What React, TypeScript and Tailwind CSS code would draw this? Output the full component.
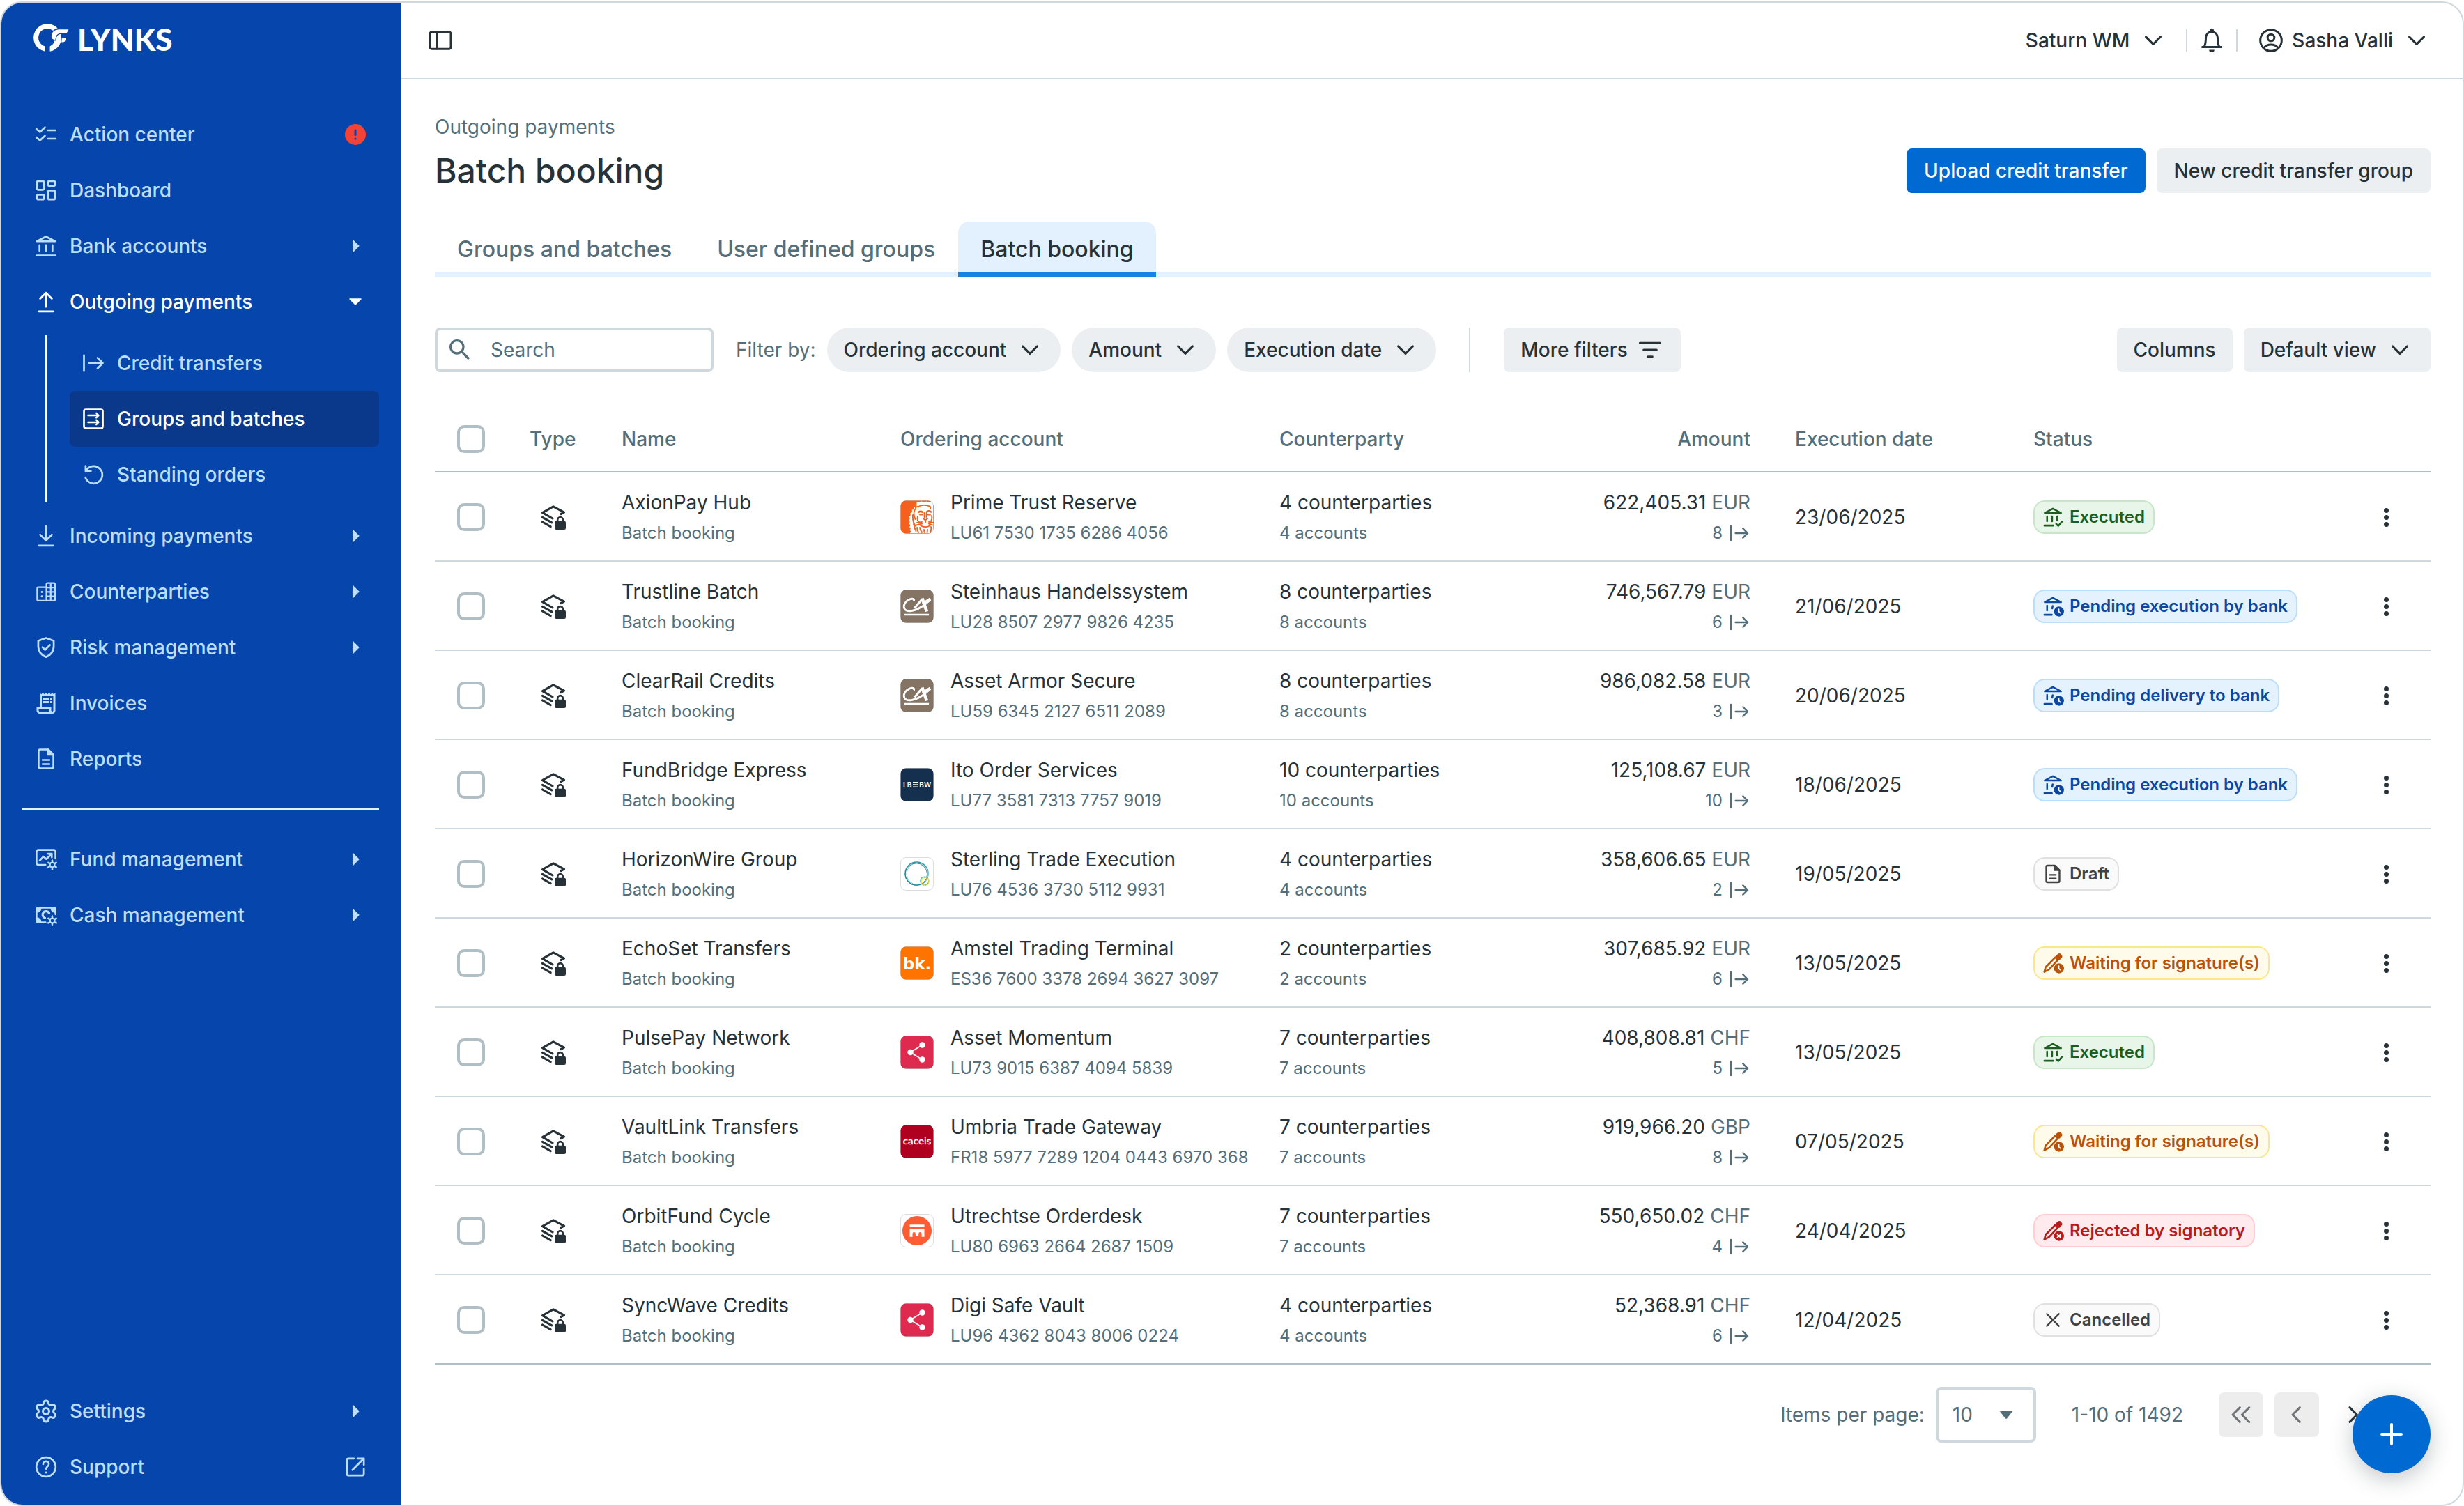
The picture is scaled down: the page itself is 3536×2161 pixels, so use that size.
import React from "react";
import type { ReactNode } from "react";
import { Settings } from "lucide-react";
import { MdOutlineReceiptLong, MdSearch } from "react-icons/md";

type IconProps = { className?: string; children: ReactNode; weight?: number };

function Glyph({ className = "size-9", children, weight = 1.8 }: IconProps) {
  return (
    <svg
      viewBox="0 0 24 24"
      aria-hidden="true"
      className={`shrink-0 ${className}`}
      fill="none"
      stroke="currentColor"
      strokeWidth={weight}
      strokeLinecap="round"
      strokeLinejoin="round"
    >
      {children}
    </svg>
  );
}

const SmallGear = () => (
  <>
    <circle cx="18" cy="17.4" r="2.3" strokeWidth="1.5" />
    <path
      strokeWidth="1.7"
      d="M18 14.2v-1.2M18 20.6v1.2M15.2 15.8l-1-.6M20.8 19l1 .6M15.2 19l-1 .6M20.8 15.8l1-.6"
    />
  </>
);

const TasksIcon = () => (
  <Glyph>
    <path d="M2.8 6.6 6.2 9.6 11 5.2M2.8 14.6l3.4 3 4.8-4.4M14 8h7.2M14 16h7.2" />
  </Glyph>
);
const DashboardIcon = () => (
  <Glyph>
    <rect x="3.4" y="3.2" width="6.6" height="8.4" rx="1.2" />
    <rect x="3.4" y="16.2" width="6.6" height="4.6" rx="1.2" />
    <rect x="14" y="3.2" width="6.6" height="4.6" rx="1.2" />
    <rect x="14" y="12.2" width="6.6" height="8.6" rx="1.2" />
  </Glyph>
);
const BankIcon = () => (
  <Glyph>
    <path d="M12 3 3.2 7.5h17.6ZM5.8 11.3v5.4M12 11.3v5.4M18.2 11.3v5.4M3 21.1h18" />
  </Glyph>
);
const UploadIcon = () => (
  <Glyph>
    <path d="M12 3.4v13.4M6.4 9 12 3.4 17.6 9M5 21.2h14" />
  </Glyph>
);
const DownloadIcon = () => (
  <Glyph>
    <path d="M12 2.8v13.4M6.4 10.8 12 16.4l5.6-5.6M5 21.2h14" />
  </Glyph>
);
const BuildingsIcon = () => (
  <Glyph weight={1.5}>
    <path d="M12.4 7.8H4.6a1 1 0 0 0-1 1v10.8a1 1 0 0 0 1 1h7.8" />
    <rect x="12.4" y="3.8" width="8.2" height="16.8" rx="1" />
    <path d="M16.5 4v16.4M12.6 8h8M12.6 12.2h8M12.6 16.4h8" />
    <path strokeWidth="1.9" d="M8 12.2v.1M8 16.4v.1" />
  </Glyph>
);
const ShieldIcon = () => (
  <Glyph>
    <path d="M12 3 19.4 5.7v5.2c0 4.8-3 8.7-7.4 10.2-4.4-1.5-7.4-5.4-7.4-10.2V5.7Z" />
    <path d="m8.6 11.8 2.5 2.5 4.6-4.6" />
  </Glyph>
);
const DocumentIcon = ({ className }: { className?: string }) => (
  <Glyph className={className} weight={1.8}>
    <path d="M14.2 3H6.4a1.5 1.5 0 0 0-1.5 1.5v15A1.5 1.5 0 0 0 6.4 21h11.2a1.5 1.5 0 0 0 1.5-1.5V8Z" />
    <path d="M14 3.2V8h4.8Z" fill="currentColor" />
    <path d="M8.8 13h6.4M8.8 17h6.4" />
  </Glyph>
);
const FundIcon = () => (
  <Glyph>
    <path d="M11.5 17.4H4.6A1.7 1.7 0 0 1 2.9 15.7V4.8a1.7 1.7 0 0 1 1.7-1.7h14.8a1.7 1.7 0 0 1 1.7 1.7v6.4" />
    <path d="m6 13.2 3.6-3.8 2.7 2.4 5-4.8M14 6.700h3.500v3.400" />
    <SmallGear />
  </Glyph>
);
const CashIcon = () => (
  <Glyph>
    <path d="M11.5 19H4.6a1.7 1.7 0 0 1-1.7-1.7V6.7A1.7 1.7 0 0 1 4.6 5h14.8a1.7 1.7 0 0 1 1.7 1.7v4.5" />
    <path fill="currentColor" d="M3.2 5.4h3.6c0 2-1.600 3.500-3.600 3.500ZM20.800 5.400h-3.600c0 2 1.600 3.500 3.600 3.500ZM3.200 18.600h3.600c0-2-1.600-3.500-3.600-3.500Z" />
    <path d="M15 10.200A3.300 3.300 0 1 0 11 14.800" strokeWidth="2.2" />
    <SmallGear />
  </Glyph>
);
const HelpIcon = () => (
  <Glyph>
    <circle cx="12" cy="12" r="9.2" />
    <path d="M9.300 9.300a2.700 2.700 0 1 1 4.200 2.200c-.9.600-1.500 1.200-1.500 2.300M12 17.300v.1" />
  </Glyph>
);
const ExternalIcon = () => (
  <Glyph>
    <path d="M10.500 3.900H5.300a1.400 1.400 0 0 0-1.400 1.400v13.400a1.400 1.400 0 0 0 1.400 1.400h13.400a1.400 1.400 0 0 0 1.400-1.400v-5.200M14 3.900h6.100V10M19.800 4.200 9.200 14.800" />
  </Glyph>
);
const TransferIcon = ({ className }: { className?: string }) => (
  <Glyph className={className}>
    <path d="M3 4.500v15M8 12h13M16 7l5 5-5 5" />
  </Glyph>
);
const GroupsIcon = () => (
  <Glyph>
    <rect x="3" y="3" width="18" height="18" rx="1.8" />
    <path d="M7 8.700h9.800M14.800 6.500 17 8.700l-2.200 2.200M7 15.300h9.800M14.800 13.100l2.200 2.200-2.200 2.200" strokeWidth="1.6" />
  </Glyph>
);
const UndoIcon = () => (
  <Glyph>
    <path d="M4.600 3.800v5h5M4.800 8.600a8.300 8.300 0 1 1-.4 6.200" />
  </Glyph>
);
const PanelIcon = () => (
  <Glyph className="size-10">
    <rect x="3" y="4.6" width="18" height="14.8" rx="1.6" />
    <path d="M9 4.800v14.400" />
  </Glyph>
);
const BellIcon = () => (
  <Glyph className="size-10">
    <circle cx="12" cy="3.4" r=".9" fill="currentColor" />
    <path d="M3.900 17.700h16.200M5.500 17.500C6.600 15.600 6.900 13.500 6.900 9.600a5.100 5.100 0 0 1 10.200 0c0 3.900.3 6 1.400 7.900" />
    <path stroke="none" fill="currentColor" d="M9.700 20.100h4.600a2.300 2 0 0 1-4.600 0Z" />
  </Glyph>
);
const UserIcon = () => (
  <Glyph className="size-10">
    <circle cx="12" cy="12" r="9.2" />
    <circle cx="12" cy="9.6" r="2.9" />
    <path d="M5.900 18.400c1.500-1.900 3.700-2.800 6.100-2.800s4.600.9 6.100 2.800" />
  </Glyph>
);
const ChevronIcon = () => (
  <Glyph className="size-10">
    <path d="m5.700 8.900 6.300 6.300 6.300-6.300" />
  </Glyph>
);
const FilterIcon = () => (
  <Glyph className="size-10">
    <path d="M3.200 6.200h17.600M6.400 12h11.200M10 17.800h4" />
  </Glyph>
);
const BatchIcon = () => (
  <Glyph className="mx-auto block size-10">
    <path d="M18.600 9.300 21.300 7.900 12 2.900 2.700 8.200l8.700 5M2.700 12.200l8 4.500M2.700 16.200l7 4" strokeWidth="1.9" />
    <rect x="13.9" y="16.2" width="8.2" height="5.9" rx=".6" fill="currentColor" strokeWidth="1.4" />
    <path d="M15.700 15.800v-1.400a2.300 2.300 0 0 1 4.600 0v1.400" strokeWidth="1.6" />
  </Glyph>
);

const ClockBadge = () => (
  <>
    <circle cx="18.6" cy="17.6" r="5.4" fill="currentColor" stroke="none" />
    <path d="M18.400 15v2.700l1.500 1.500" className="stroke-white" strokeWidth="1.3" />
  </>
);
const PenShape = () => (
  <>
    <path d="M2.800 21.400 4.200 16.300 14.600 5.700l2.800 2.800L8 18.600Z" strokeWidth="2" />
    <path d="m15.800 4.600 2-1.600a1.700 1.700 0 0 1 2.400.1l.5.600a1.700 1.700 0 0 1-.1 2.300l-1.900 1.900Z" fill="currentColor" />
  </>
);
const BankDoneIcon = () => (
  <Glyph className="size-8" weight={1.9}>
    <path d="M12 2.900 3.200 7.500h17.600ZM5.800 11.300v5.200M11.200 11.300v5.200M16.600 11.300v4M2.900 21.100h9.600M15.600 19.300l2.200 2.200 4-4.600" />
  </Glyph>
);
const BankWaitIcon = () => (
  <Glyph className="size-8" weight={1.9}>
    <path d="M12 2.900 3.200 7.500h17.600ZM5.800 11.300v5.200M11.800 11.600l-.4 2.600M2.900 21.100h8" />
    <ClockBadge />
  </Glyph>
);
const SignWaitIcon = () => (
  <Glyph className="size-8">
    <PenShape />
    <ClockBadge />
  </Glyph>
);
const SignRejectIcon = () => (
  <Glyph className="size-8">
    <PenShape />
    <circle cx="18.6" cy="17.6" r="5.4" fill="currentColor" stroke="none" />
    <path d="m16.800 15.800 3.600 3.600M20.400 15.800l-3.600 3.600" className="stroke-white" strokeWidth="1.4" />
  </Glyph>
);
const CrossIcon = () => (
  <Glyph className="size-8">
    <path d="m5.500 5.500 13 13M18.500 5.500l-13 13" />
  </Glyph>
);

/* Bank brands */

const Tile = ({ fill, children }: { fill: string; children: ReactNode }) => (
  <svg viewBox="0 0 48 48" aria-hidden="true" className="size-12 shrink-0">
    <rect x=".5" y=".5" width="47" height="47" rx="7.5" fill={fill} />
    {children}
    <rect x=".5" y=".5" width="47" height="47" rx="7.5" fill="none" stroke="#263238" strokeOpacity=".16" />
  </svg>
);

const LionLogo = () => (
  <Tile fill="#f4611f">
    <path
      fill="#fff"
      d="M47 4.500V45c0 1-1 2-2 2H14l1.500-3-2-1 1.500-3-2-1.500 1.500-3-2-2 1.300-3-1.600-2 1.800-2.500-1.200-2.500 2-2-.5-3 2.500-1.500 0-3.500 2.500-.5 1-4 3 .5L23.500 2l3 1L30 1.300l3.500 1.500L38 1.500l3 1.500 4-1Z"
    />
    <g fill="none" stroke="#f4611f" strokeWidth="1.9" strokeLinecap="round">
      <path d="M22 13c-1-3 2-5 4-3.500M43 12c1-2 0-4-2-3.800M26 9c3-2.500 12-3 16-.5" />
      <path d="M26 17c2-1.500 4-1.500 6 0M38 16.500c2-1.500 4-1.500 6 0" strokeWidth="2.6" />
      <path d="M28 20.500h3.500M39 20.500h4M34.500 18v6M37.500 18v6M33 26l3 2.500 3-2.500M36 29v3" />
      <path d="M20.500 14c-2 5-1 9 1 13M18 21c-.5 6 1 12 4 16M19 31c0 5 1.500 9 3.500 13M24 32l7-1M23 35.500l8-2M41 31l6 1M41 33.500l5 2" />
      <path d="M29 36c4 3 11 3 14-.5M28 39c0 3 2 5 3 7M44 38c1 3 0 5-1 8M34 42l.5 4M39 42l-.5 4M24 39c0 3 1 5 2 7" />
      <path d="M25 23c-1 4 0 7 2 8M45 22c1 3 0 6-1 8" />
    </g>
  </Tile>
);
const AgricoleLogo = () => (
  <Tile fill="#857364">
    <g fill="none" stroke="#fff" strokeLinecap="butt">
      <path d="M19.500 16.500C20.500 13 17 12.600 13.500 14 7 16.800 3.500 23 6 27.500c3.500 5.500 15 3.500 24-2.500 5-3.300 9-7 13.500-10.500" strokeWidth="2.8" />
      <path d="M20.500 26.500 31.500 13.500" strokeWidth="3.2" />
      <path d="M31.300 12.500 38 31.500" strokeWidth="4.6" />
      <path d="M34 19.500 43 13.500" strokeWidth="4" />
      <path d="M5 36h36" strokeWidth="2.4" />
    </g>
  </Tile>
);
const LandesbankLogo = () => (
  <Tile fill="#15304f">
    <text x="4" y="27.5" fill="#fff" fontFamily="Inter, sans-serif" fontSize="10" fontWeight="600">LB</text>
    <path d="M18 20.600h8M18 24h8M18 27.200h8" stroke="#fff" strokeWidth="1.3" />
    <text x="27.3" y="27.5" fill="#fff" fontFamily="Inter, sans-serif" fontSize="10" fontWeight="600">BW</text>
  </Tile>
);
const RingsLogo = () => (
  <Tile fill="#fff">
    <g fill="none">
      <circle cx="23.5" cy="23.5" r="16.5" stroke="#2a9aa8" strokeWidth="1.4" />
      <circle cx="24.5" cy="24" r="15.5" stroke="#7fcbd0" strokeWidth="1" />
      <circle cx="22.8" cy="24.5" r="15.8" stroke="#1f7f92" strokeWidth=".9" />
      <circle cx="34.8" cy="34" r="6" stroke="#43b3b8" strokeWidth="1.1" />
      <circle cx="35.5" cy="35" r="5.6" stroke="#f0dc2e" strokeWidth="1.3" />
    </g>
  </Tile>
);
const BkLogo = () => (
  <Tile fill="#ff7300">
    <text x="24" y="33" textAnchor="middle" fill="#fff" fontFamily="DejaVu Sans, sans-serif" fontSize="23" fontWeight="700">bk.</text>
  </Tile>
);
const ShareLogo = () => (
  <Tile fill="#df2a50">
    <path d="M14.500 24 31.500 13.500M14.500 24 31.500 34.500" stroke="#fff" strokeWidth="1.5" />
    <g fill="#fff">
      <circle cx="14.5" cy="24" r="4.2" />
      <circle cx="31.5" cy="13.5" r="4.2" />
      <circle cx="31.5" cy="34.5" r="4.2" />
    </g>
  </Tile>
);
const CaceisLogo = () => (
  <Tile fill="#b00020">
    <text x="24" y="28" textAnchor="middle" fill="#fff" stroke="#fff" strokeWidth=".4" fontFamily="DejaVu Sans, sans-serif" fontSize="13">caceis</text>
  </Tile>
);
const DeskLogo = () => (
  <Tile fill="#fff">
    <circle cx="24" cy="24" r="21" fill="#ff5b35" />
    <path fill="#fff" d="M13.500 15.300h21v3.400h-21ZM13.500 21.200h21v11.600h-3.900v-4.600a2.200 2.200 0 0 0-4.400 0v3.600h-4.300v-3.600a2.200 2.200 0 0 0-4.400 0v4.600h-4Z" />
  </Tile>
);

/* Sidebar */

const Arrow = ({ open = false }: { open?: boolean }) => (
  <svg viewBox="0 0 24 24" aria-hidden="true" className="size-9 shrink-0" fill="currentColor" stroke="currentColor" strokeLinejoin="round">
    {open ? <path d="M6.700 9.300h10.600L12 14.600Z" /> : <path d="M9.800 6.600 15.200 12l-5.400 5.400Z" />}
  </svg>
);

const Alert = () => (
  <span className="flex size-9 shrink-0 items-center justify-center">
    <svg viewBox="0 0 30 30" role="img" aria-label="Attention needed" className="size-[30px]">
      <circle cx="15" cy="15" r="15" fill="#f44336" />
      <path d="M15 9v6.400M15 21v.2" stroke="#0645ab" strokeWidth="3" strokeLinecap="round" />
    </svg>
  </span>
);

type NavItemProps = { icon: ReactNode; label: string; trailing?: ReactNode; active?: boolean };

function NavItem({ icon, label, trailing, active = false }: NavItemProps) {
  return (
    <li>
      <a href="#" className={`flex h-20 items-center gap-4 px-4 ${active ? "text-white" : "text-[#bbdefb]"}`}>
        {icon}
        <span className="flex-1">{label}</span>
        {trailing}
      </a>
    </li>
  );
}

function SubItem({ icon, label, active = false }: NavItemProps) {
  return (
    <li>
      <a
        href="#"
        aria-current={active ? "page" : undefined}
        className={`flex h-20 items-center gap-4 rounded-lg px-4 ${active ? "bg-[#0a398b] text-white" : "text-[#bbdefb]"}`}
      >
        {icon}
        <span>{label}</span>
      </a>
    </li>
  );
}

function Sidebar() {
  return (
    <aside className="flex w-[574px] shrink-0 flex-col bg-[#0645ab] pt-[30px] pr-8 pb-3.5 pl-[30px] text-[28px] font-medium">
      <a href="#" className="mb-[79px] flex h-10 items-center gap-3 px-4 text-white">
        <svg viewBox="0 0 51 40" aria-hidden="true" className="h-10 w-[51px]" fill="currentColor">
          <path d="M16.700 39.800A20 20 0 1 1 34.500 6.200L29 10.600A13 13 0 1 0 16.700 32.600Z" />
          <path d="M23.600 39.800V32.600A13 13 0 0 0 31 19.500V15h8.500A20 20 0 0 1 23.600 39.800Z" />
          <path
            stroke="#0645ab"
            strokeWidth="1.2"
            d="M25.200 17.500C25.600 11.500 30 7.600 36.500 7.600H51.500L48.600 13c-.6 1-1.400 1.400-3 1.400H39c-4.500 0-6.800 2.600-7.300 9.600-4-.6-6.700-3-6.500-6.500Z"
          />
          <path d="M40.700 21.600c.4-1 1-1.400 2-1.400h4.600l-2 4.600c-.6 1.200-1.400 1.700-2.800 1.700h-2.300Z" />
        </svg>
        <span className="pt-1 font-['Lato',sans-serif] text-[44px] leading-10 font-black">LYNKS</span>
      </a>
      <nav aria-label="Main" className="flex flex-1 flex-col">
        <ul>
          <NavItem icon={<TasksIcon />} label="Action center" trailing={<Alert />} />
          <NavItem icon={<DashboardIcon />} label="Dashboard" />
          <NavItem icon={<BankIcon />} label="Bank accounts" trailing={<Arrow />} />
          <NavItem icon={<UploadIcon />} label="Outgoing payments" trailing={<Arrow open />} active />
          <li>
            <ul className="my-2 ml-[33px] border-l-2 border-white pl-[33px]">
              <SubItem icon={<TransferIcon />} label="Credit transfers" />
              <SubItem icon={<GroupsIcon />} label="Groups and batches" active />
              <SubItem icon={<UndoIcon />} label="Standing orders" />
            </ul>
          </li>
          <NavItem icon={<DownloadIcon />} label="Incoming payments" trailing={<Arrow />} />
          <NavItem icon={<BuildingsIcon />} label="Counterparties" trailing={<Arrow />} />
          <NavItem icon={<ShieldIcon />} label="Risk management" trailing={<Arrow />} />
          <NavItem icon={<MdOutlineReceiptLong className="size-9" />} label="Invoices" />
          <NavItem icon={<DocumentIcon />} label="Reports" />
        </ul>
        <div className="flex h-16 items-center">
          <hr className="w-full border-t-2 border-[#e3f2fd]" />
        </div>
        <ul>
          <NavItem icon={<FundIcon />} label="Fund management" trailing={<Arrow />} />
          <NavItem icon={<CashIcon />} label="Cash management" trailing={<Arrow />} />
        </ul>
        <ul className="mt-auto">
          <NavItem icon={<Settings className="size-9" strokeWidth={2} />} label="Settings" trailing={<Arrow />} />
          <NavItem icon={<HelpIcon />} label="Support" trailing={<ExternalIcon />} />
        </ul>
      </nav>
    </aside>
  );
}

/* Table */

type StatusKey = "executed" | "pendingExecution" | "pendingDelivery" | "draft" | "waiting" | "rejected" | "cancelled";

const statuses: Record<StatusKey, { label: string; icon: ReactNode; tone: string }> = {
  executed: { label: "Executed", icon: <BankDoneIcon />, tone: "border-[#c8e6c9] bg-[#e8f5e9] text-[#1b5e20]" },
  pendingExecution: { label: "Pending execution by bank", icon: <BankWaitIcon />, tone: "border-[#bbdefb] bg-[#e3f2fd] text-[#0d47a1]" },
  pendingDelivery: { label: "Pending delivery to bank", icon: <BankWaitIcon />, tone: "border-[#bbdefb] bg-[#e3f2fd] text-[#0d47a1]" },
  draft: { label: "Draft", icon: <DocumentIcon className="size-8" />, tone: "border-[#e0e0e0] bg-[#fafafa] text-[#424242]" },
  waiting: { label: "Waiting for signature(s)", icon: <SignWaitIcon />, tone: "border-[#fde68a] bg-[#fffbeb] text-[#b9530a]" },
  rejected: { label: "Rejected by signatory", icon: <SignRejectIcon />, tone: "border-[#ffcdd2] bg-[#ffebee] text-[#b71c1c]" },
  cancelled: { label: "Cancelled", icon: <CrossIcon />, tone: "border-[#e0e0e0] bg-[#fafafa] text-[#424242]" },
};

type Row = {
  name: string;
  logo: ReactNode;
  account: string;
  iban: string;
  parties: number;
  amount: string;
  currency: string;
  transfers: number;
  date: string;
  status: StatusKey;
};

const rows: Row[] = [
  { name: "AxionPay Hub", logo: <LionLogo />, account: "Prime Trust Reserve", iban: "LU61 7530 1735 6286 4056", parties: 4, amount: "622,405.31", currency: "EUR", transfers: 8, date: "23/06/2025", status: "executed" },
  { name: "Trustline Batch", logo: <AgricoleLogo />, account: "Steinhaus Handelssystem", iban: "LU28 8507 2977 9826 4235", parties: 8, amount: "746,567.79", currency: "EUR", transfers: 6, date: "21/06/2025", status: "pendingExecution" },
  { name: "ClearRail Credits", logo: <AgricoleLogo />, account: "Asset Armor Secure", iban: "LU59 6345 2127 6511 2089", parties: 8, amount: "986,082.58", currency: "EUR", transfers: 3, date: "20/06/2025", status: "pendingDelivery" },
  { name: "FundBridge Express", logo: <LandesbankLogo />, account: "Ito Order Services", iban: "LU77 3581 7313 7757 9019", parties: 10, amount: "125,108.67", currency: "EUR", transfers: 10, date: "18/06/2025", status: "pendingExecution" },
  { name: "HorizonWire Group", logo: <RingsLogo />, account: "Sterling Trade Execution", iban: "LU76 4536 3730 5112 9931", parties: 4, amount: "358,606.65", currency: "EUR", transfers: 2, date: "19/05/2025", status: "draft" },
  { name: "EchoSet Transfers", logo: <BkLogo />, account: "Amstel Trading Terminal", iban: "ES36 7600 3378 2694 3627 3097", parties: 2, amount: "307,685.92", currency: "EUR", transfers: 6, date: "13/05/2025", status: "waiting" },
  { name: "PulsePay Network", logo: <ShareLogo />, account: "Asset Momentum", iban: "LU73 9015 6387 4094 5839", parties: 7, amount: "408,808.81", currency: "CHF", transfers: 5, date: "13/05/2025", status: "executed" },
  { name: "VaultLink Transfers", logo: <CaceisLogo />, account: "Umbria Trade Gateway", iban: "FR18 5977 7289 1204 0443 6970 368", parties: 7, amount: "919,966.20", currency: "GBP", transfers: 8, date: "07/05/2025", status: "waiting" },
  { name: "OrbitFund Cycle", logo: <DeskLogo />, account: "Utrechtse Orderdesk", iban: "LU80 6963 2664 2687 1509", parties: 7, amount: "550,650.02", currency: "CHF", transfers: 4, date: "24/04/2025", status: "rejected" },
  { name: "SyncWave Credits", logo: <ShareLogo />, account: "Digi Safe Vault", iban: "LU96 4362 8043 8006 0224", parties: 4, amount: "52,368.91", currency: "CHF", transfers: 6, date: "12/04/2025", status: "cancelled" },
];

const Checkbox = ({ label }: { label: string }) => (
  <input
    type="checkbox"
    aria-label={label}
    className="block size-10 appearance-none rounded-[10px] border-4 border-[#b0bec5] bg-white checked:bg-[#0069d2]"
  />
);

function StatusBadge({ status }: { status: StatusKey }) {
  const { label, icon, tone } = statuses[status];
  return (
    <span className={`inline-flex h-12 items-center gap-2 rounded-2xl border-2 px-2.5 align-middle text-2xl font-semibold whitespace-nowrap ${tone}`}>
      {icon}
      <span className="pr-0.5">{label}</span>
    </span>
  );
}

const first = "leading-[46px] whitespace-nowrap";
const second = "text-2xl leading-[42px] whitespace-nowrap text-[#546e7a]";

function PaymentsTable() {
  return (
    <table className="mt-12 w-full table-fixed text-left text-[28px]">
      <colgroup>
        <col className="w-[104px]" />
        <col className="w-[132px]" />
        <col className="w-[400px]" />
        <col className="w-[544px]" />
        <col className="w-[370px]" />
        <col className="w-[370px]" />
        <col className="w-[342px]" />
        <col />
        <col className="w-32" />
      </colgroup>
      <thead>
        <tr className="h-24 text-[#546e7a] shadow-[inset_0_-2px_0_#b0bec5] [&>th]:font-medium">
          <th className="px-8">
            <Checkbox label="Select all batches" />
          </th>
          <th className="pl-8">Type</th>
          <th className="pl-8">Name</th>
          <th className="pl-8">Ordering account</th>
          <th className="pl-8">Counterparty</th>
          <th className="pr-8 text-right">Amount</th>
          <th className="pl-8">Execution date</th>
          <th className="pl-8">Status</th>
          <th aria-label="Actions" />
        </tr>
      </thead>
      <tbody className="text-[#263238]">
        {rows.map((row) => (
          <tr key={row.name} className="h-32 shadow-[inset_0_-2px_0_#cfd8dc] last:shadow-[inset_0_-2px_0_#b0bec5]">
            <td className="px-8">
              <Checkbox label={`Select ${row.name}`} />
            </td>
            <td>
              <BatchIcon />
            </td>
            <td className="pl-8">
              <div className={first}>{row.name}</div>
              <div className={second}>Batch booking</div>
            </td>
            <td className="pl-8">
              <div className="flex items-center gap-6">
                {row.logo}
                <div>
                  <div className={first}>{row.account}</div>
                  <div className={second}>{row.iban}</div>
                </div>
              </div>
            </td>
            <td className="pl-8">
              <div className={first}>{row.parties} counterparties</div>
              <div className={second}>{row.parties} accounts</div>
            </td>
            <td className="pr-8 text-right">
              <div className={first}>
                {row.amount} <span className="text-[#546e7a]">{row.currency}</span>
              </div>
              <div className={`flex items-center justify-end gap-2 ${second}`}>
                {row.transfers}
                <TransferIcon className="size-8" />
              </div>
            </td>
            <td className="pl-8">{row.date}</td>
            <td className="pl-8">
              <StatusBadge status={row.status} />
            </td>
            <td>
              <button type="button" aria-label={`Actions for ${row.name}`} className="mx-auto flex size-16 flex-col items-center justify-center gap-[3px]">
                <span className="size-[7px] rounded-full bg-[#263238]" />
                <span className="size-[7px] rounded-full bg-[#263238]" />
                <span className="size-[7px] rounded-full bg-[#263238]" />
              </button>
            </td>
          </tr>
        ))}
      </tbody>
    </table>
  );
}

const Chip = ({ label }: { label: string }) => (
  <button type="button" className="flex h-16 items-center gap-3.5 rounded-full bg-[#eceff1] px-6 font-medium">
    {label}
    <ChevronIcon />
  </button>
);

const pageButton = "flex size-16 items-center justify-center rounded-lg";

function Pagination() {
  return (
    <div className="flex items-center justify-end pt-8 text-[28px] text-[#546e7a]">
      <label htmlFor="page-size">Items per page:</label>
      <div className="relative ml-4">
        <select id="page-size" defaultValue="10" className="h-20 w-36 appearance-none rounded-lg border-4 border-[#cfd8dc] bg-white pl-5">
          <option>10</option>
          <option>25</option>
          <option>50</option>
        </select>
        <svg viewBox="0 0 22 12" aria-hidden="true" className="pointer-events-none absolute top-[34px] right-8 h-3 w-[22px]" fill="currentColor">
          <path d="M1 0h20L12.500 11a2 2 0 0 1-3 0Z" />
        </svg>
      </div>
      <span className="mx-[51px]">1-10 of 1492</span>
      <div className="flex gap-4">
        <button type="button" disabled aria-label="First page" className={`${pageButton} bg-[#ededed] text-[#6f7376]`}>
          <Glyph className="size-10">
            <path d="m11 5.800-6.200 6.200 6.200 6.200M19 5.800l-6.200 6.200 6.200 6.200" />
          </Glyph>
        </button>
        <button type="button" disabled aria-label="Previous page" className={`${pageButton} bg-[#ededed] text-[#6f7376]`}>
          <Glyph className="size-10">
            <path d="m14.600 5.800-6.200 6.200 6.200 6.200" />
          </Glyph>
        </button>
        <button type="button" aria-label="Next page" className={`${pageButton} text-[#263238]`}>
          <Glyph className="size-10">
            <path d="m9.600 5.800 6.200 6.200-6.200 6.200" />
          </Glyph>
        </button>
        <button type="button" aria-label="Last page" className={`${pageButton} text-[#263238]`}>
          <Glyph className="size-10">
            <path d="m5 5.800 6.200 6.200L5 18.200M13 5.800l6.200 6.200-6.200 6.200" />
          </Glyph>
        </button>
      </div>
    </div>
  );
}

function TopBar() {
  return (
    <header className="flex h-[110px] shrink-0 items-center justify-between border-b-2 border-[#cfd8dc] pr-[46px] pl-9 text-[28px] font-medium">
      <button type="button" aria-label="Toggle sidebar">
        <PanelIcon />
      </button>
      <div className="flex items-center">
        <button type="button" className="mr-[27px] flex items-center gap-3.5">
          Saturn WM
          <ChevronIcon />
        </button>
        <span className="h-8 w-0.5 bg-[#cfd8dc]" />
        <button type="button" aria-label="Notifications" className="mx-[15px]">
          <BellIcon />
        </button>
        <span className="h-8 w-0.5 bg-[#cfd8dc]" />
        <button type="button" className="ml-7 flex items-center gap-2.5">
          <UserIcon />
          <span className="pr-1">Sasha Valli</span>
          <ChevronIcon />
        </button>
      </div>
    </header>
  );
}

const tabs = ["Groups and batches", "User defined groups", "Batch booking"];

export default function App() {
  return (
    <div className="min-h-screen bg-white pt-0.5 font-['Inter',sans-serif] text-[#263238]">
      <div className="relative flex min-h-[calc(100vh-2px)] overflow-hidden rounded-[32px] border-2 border-[#cfd8dc]">
        <Sidebar />
        <div className="flex min-w-0 flex-1 flex-col">
          <TopBar />
          <main className="pt-12 pr-[46px] pb-8 pl-12">
            <nav aria-label="Breadcrumb" className="text-[28px] leading-10 text-[#546e7a]">
              <a href="#">Outgoing payments</a>
            </nav>
            <div className="mt-[11px] flex h-16 items-center justify-between">
              <h1 className="text-5xl font-medium">Batch booking</h1>
              <div className="flex gap-4 text-[28px] font-medium">
                <button type="button" className="h-16 rounded-lg bg-[#0069d2] px-[25px] text-white">
                  Upload credit transfer
                </button>
                <button type="button" className="h-16 rounded-lg bg-[#eceff1] px-[25px]">
                  New credit transfer group
                </button>
              </div>
            </div>

            <div role="tablist" className="mt-[41px] flex h-20 gap-px text-[32px] font-medium shadow-[inset_0_-8px_0_#e3f1fe]">
              {tabs.map((tab) => {
                const selected = tab === "Batch booking";
                return (
                  <button
                    key={tab}
                    type="button"
                    role="tab"
                    aria-selected={selected}
                    className={`px-8 ${selected ? "rounded-t-2xl bg-[#e3f1fe] shadow-[inset_0_-8px_0_#1782e6]" : "text-[#546e7a]"}`}
                  >
                    {tab}
                  </button>
                );
              })}
            </div>

            <div className="mt-[72px] flex items-center text-[28px]">
              <label className="flex h-16 w-[400px] items-center gap-6 rounded-lg border-4 border-[#cfd8dc] px-3 text-[#546e7a]">
                <MdSearch className="size-10 shrink-0" aria-hidden="true" />
                <input
                  type="search"
                  aria-label="Search batches"
                  placeholder="Search"
                  className="w-full min-w-0 bg-transparent outline-none placeholder:text-[#546e7a]"
                />
              </label>
              <span className="mr-4 ml-8 text-[#546e7a]">Filter by:</span>
              <div className="flex gap-4">
                <Chip label="Ordering account" />
                <Chip label="Amount" />
                <Chip label="Execution date" />
              </div>
              <span className="mr-12 ml-[47px] h-16 w-0.5 bg-[#cfd8dc]" />
              <button type="button" className="flex h-16 items-center gap-3 rounded-lg bg-[#eceff1] px-6 font-medium">
                More filters
                <FilterIcon />
              </button>
              <div className="ml-auto flex gap-4 font-medium">
                <button type="button" className="h-16 rounded-lg bg-[#eceff1] px-6">
                  Columns
                </button>
                <button type="button" className="flex h-16 items-center gap-3.5 rounded-lg bg-[#eceff1] px-6">
                  Default view
                  <ChevronIcon />
                </button>
              </div>
            </div>

            <PaymentsTable />
            <Pagination />
          </main>
        </div>
        <button
          type="button"
          aria-label="Create"
          className="absolute right-[46px] bottom-[45px] flex size-28 items-center justify-center rounded-full bg-[#0069d2] text-white shadow-[0_8px_32px_rgba(38,50,56,0.28)]"
        >
          <svg viewBox="0 0 32 32" aria-hidden="true" className="size-8">
            <path d="M16 2v28M2 16h28" stroke="currentColor" strokeWidth="4" strokeLinecap="round" />
          </svg>
        </button>
      </div>
    </div>
  );
}
